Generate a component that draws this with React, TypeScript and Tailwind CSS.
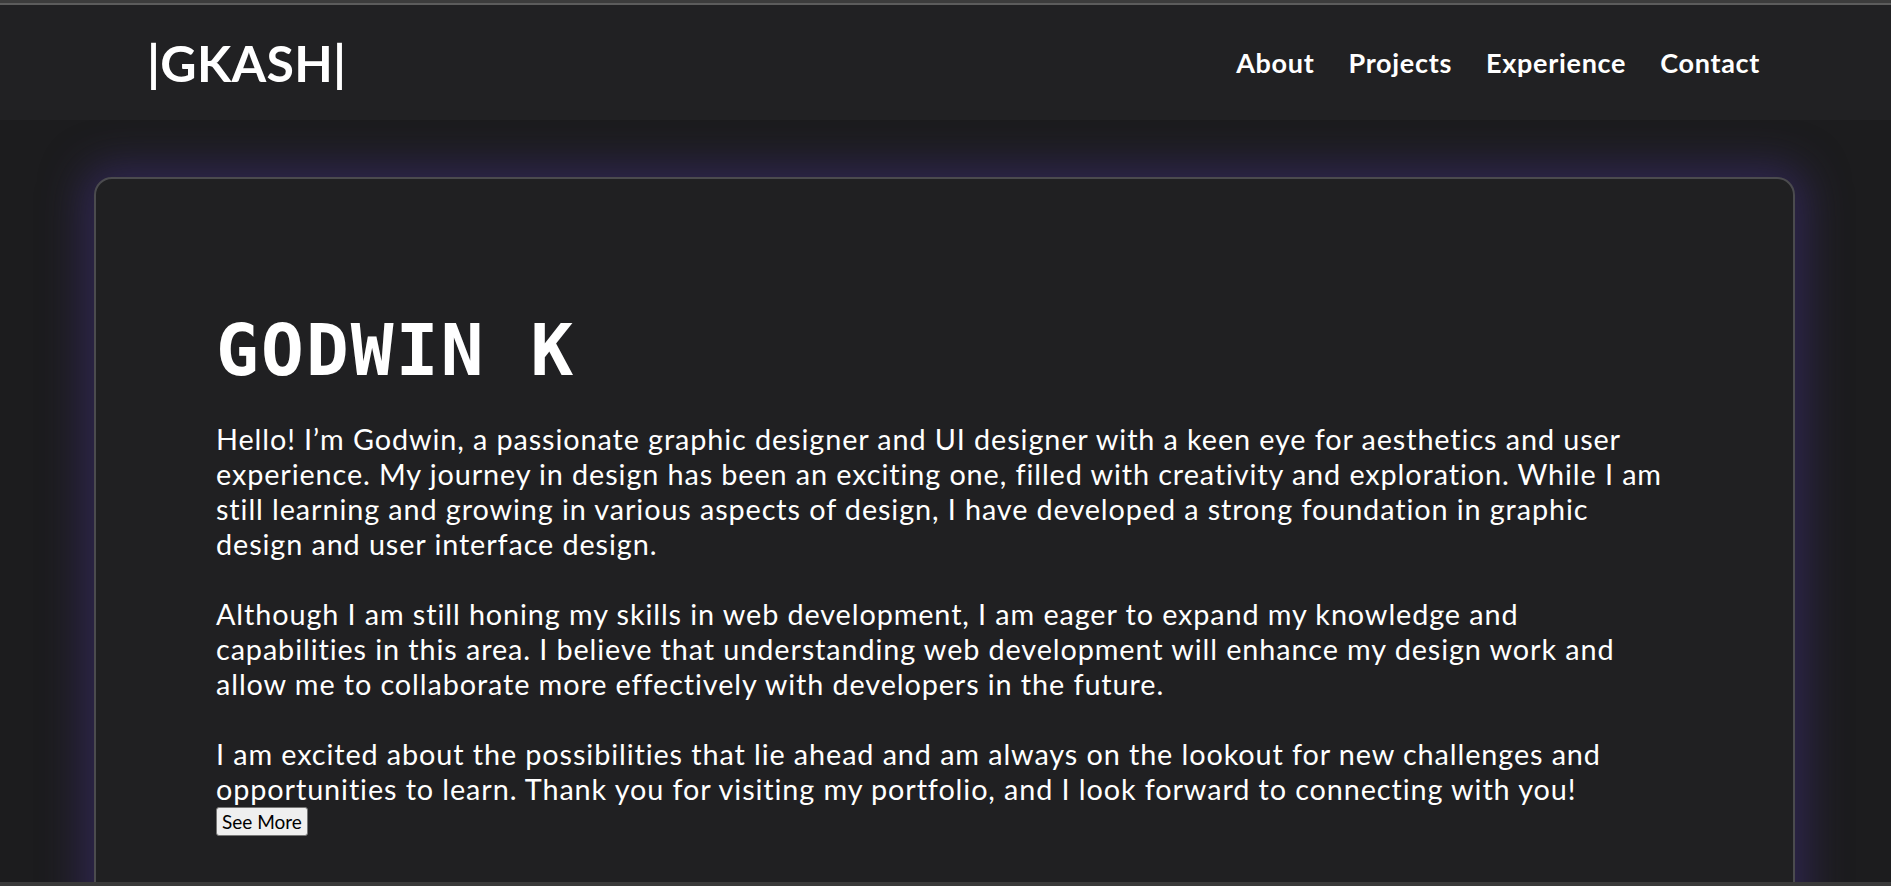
import React from 'react'

const nav = ['About', 'Projects', 'Experience', 'Contact']

const paragraphs = [
  [
    'Hello! I’m Godwin, a passionate graphic designer and UI designer with a keen eye for aesthetics and user',
    'experience. My journey in design has been an exciting one, filled with creativity and exploration. While I am',
    'still learning and growing in various aspects of design, I have developed a strong foundation in graphic',
    'design and user interface design.',
  ],
  [
    'Although I am still honing my skills in web development, I am eager to expand my knowledge and',
    'capabilities in this area. I believe that understanding web development will enhance my design work and',
    'allow me to collaborate more effectively with developers in the future.',
  ],
  [
    'I am excited about the possibilities that lie ahead and am always on the lookout for new challenges and',
    'opportunities to learn. Thank you for visiting my portfolio, and I look forward to connecting with you!',
  ],
]

export default function App() {
  return (
    <div className="flex h-[886px] flex-col overflow-hidden bg-[#1c1c1e] font-['Lato','Noto_Sans',sans-serif] text-white">
      <div className="h-[3px] bg-[#3c3c3c]" />
      <div className="h-[2px] bg-[#5c5c5c]" />

      <header className="flex h-[115px] shrink-0 items-center justify-between bg-[#212123] pl-[147px] pr-[131px]">
        <a href="#" className="text-[50px] font-bold leading-none tracking-[0.3px]">|GKASH|</a>
        <nav className="flex items-center gap-[34px]">
          {nav.map((item) => (
            <a key={item} href="#" className="text-[27px] font-bold leading-none tracking-[0.7px]">
              {item}
            </a>
          ))}
        </nav>
      </header>

      <main className="flex-1 overflow-hidden pl-[94px] pr-[96px] pt-[57px]">
        <section className="min-h-[900px] rounded-[18px] border-2 border-[#4b4b4e] bg-[#202022] pl-[120px] pt-[136px] shadow-[0_0_40px_12px_rgba(62,46,120,0.55)]">
          <h1 className="font-['DejaVu_Sans_Mono',monospace] text-[71px] font-bold leading-none tracking-[2.2px]">GODWIN K</h1>

          {/* line breaks follow the original wrap */}
          <div className="mt-[36px] text-[28.8px] leading-[35px] tracking-[0.9px]">
            {paragraphs.map((lines, i) => (
              <p key={i} className={i > 0 ? 'mt-[35px]' : ''}>
                {lines.map((line) => (
                  <span key={line} className="block whitespace-nowrap">
                    {line}
                  </span>
                ))}
              </p>
            ))}
          </div>

          <button className="h-[29px] rounded-[3px] border border-[#767676] bg-[#efefef] px-[5px] text-[19px] leading-none text-black">
            See More
          </button>
        </section>
      </main>

      <div className="h-[4px] shrink-0 bg-[#3a3a3a]" />
    </div>
  )
}
